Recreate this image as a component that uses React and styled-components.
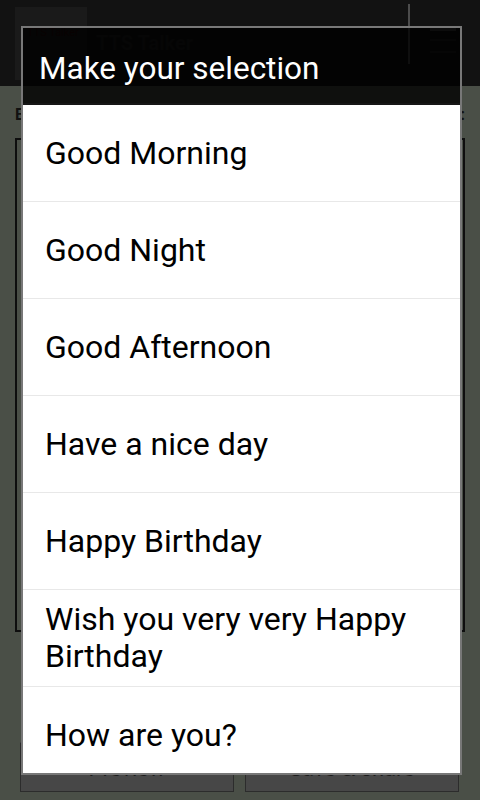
import React from "react";
import styled, { createGlobalStyle } from "styled-components";

const GlobalStyle = createGlobalStyle`
  body {
    margin: 0;
    background: #4a4f47;
    font-family: Roboto, "Noto Sans", sans-serif;
  }
`;

const Screen = styled.div`
  position: relative;
  width: 480px;
  height: 800px;
  overflow: hidden;
  background: #4a4f47;
`;

// app underneath the dialog (already dimmed)
const ActionBar = styled.div`
  height: 86px;
  background: #121212;
  display: flex;
  align-items: center;
  padding-left: 15px;
  box-sizing: border-box;
`;

const Logo = styled.div`
  width: 72px;
  height: 73px;
  background: #1a1a1a;
  color: #2a0808;
  font-size: 11px;
  padding: 19px 0 0 12px;
  box-sizing: border-box;
`;

const AppTitle = styled.div`
  margin-left: 9px;
  flex: 1;
  font-size: 20px;
  font-weight: bold;
  color: #1e1e1e;
`;

const BarDivider = styled.div`
  width: 2px;
  height: 60px;
  background: #4c4c4c;
  margin-top: -18px;
`;

const MenuButton = styled.div`
  width: 70px;
  display: flex;
  justify-content: center;
`;

const Content = styled.div`
  padding: 0 15px;
`;

const Label = styled.div`
  height: 52px;
  display: flex;
  align-items: center;
  justify-content: space-between;
  font-size: 16px;
  font-weight: bold;
  color: #111;
  padding-top: 4px;
  box-sizing: border-box;
`;

const TextBox = styled.div`
  height: 494px;
  border: 2px solid #0e0e0e;
  box-sizing: border-box;
`;

const ButtonRow = styled.div`
  display: flex;
  gap: 11px;
  margin-top: 110px;
  padding: 0 6px 0 5px;
`;

const Button = styled.div`
  flex: 1;
  height: 50px;
  background: #474747;
  border: 1px solid #2c2c2c;
  border-top-color: #555;
  display: flex;
  align-items: center;
  justify-content: center;
  padding-top: 2px;
  box-sizing: border-box;
  font-size: 22px;
  color: #1c1c1c;
`;

// dialog
const Overlay = styled.div`
  position: absolute;
  inset: 0;
  padding: 26px 18px 25px 21px;
  display: flex;
  flex-direction: column;
`;

const Dialog = styled.div`
  flex: 1;
  display: flex;
  flex-direction: column;
  border: 2px solid #787878;
  overflow: hidden;
`;

const DialogTitle = styled.div`
  height: 77px;
  flex-shrink: 0;
  background: rgba(0, 0, 0, 0.8);
  border-bottom: 2px solid #161616;
  display: flex;
  align-items: center;
  padding: 6px 0 0 16px;
  box-sizing: border-box;
  font-size: 31.5px;
  color: #fff;
`;

const List = styled.div`
  flex: 1;
  background: #fff;
  overflow: hidden;
`;

const Item = styled.div`
  min-height: 96px;
  border-bottom: 1px solid #e8e8e8;
  display: flex;
  align-items: center;
  padding: 0 22px;
  font-size: 32px;
  line-height: 37px;
  color: #000;
`;

const phrases = [
  "Good Morning",
  "Good Night",
  "Good Afternoon",
  "Have a nice day",
  "Happy Birthday",
  "Wish you very very Happy Birthday",
  "How are you?",
  "Thank you",
];

function MenuIcon() {
  return (
    <svg width="30" height="32" viewBox="0 0 30 32">
      <rect x="0" y="0" width="26" height="4" fill="#3c3c3c" />
      <rect x="0" y="12" width="26" height="2" fill="#1e1e1e" />
      <rect x="0" y="24" width="26" height="2" fill="#1e1e1e" />
    </svg>
  );
}

export default function App() {
  return (
    <Screen>
      <GlobalStyle />
      <ActionBar>
        <Logo>TTS Talker</Logo>
        <AppTitle>TTS Talker</AppTitle>
        <BarDivider />
        <MenuButton>
          <MenuIcon />
        </MenuButton>
      </ActionBar>
      <Content>
        <Label>
          <span>Enter text</span>
          <span>:</span>
        </Label>
        <TextBox />
        <ButtonRow>
          <Button>Preview</Button>
          <Button>Save &amp; share</Button>
        </ButtonRow>
      </Content>

      <Overlay>
        <Dialog>
          <DialogTitle>Make your selection</DialogTitle>
          <List>
            {phrases.map((p) => (
              <Item key={p}>{p}</Item>
            ))}
          </List>
        </Dialog>
      </Overlay>
    </Screen>
  );
}
